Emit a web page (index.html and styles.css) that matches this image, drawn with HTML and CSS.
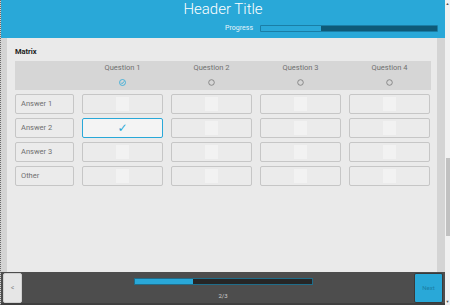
FILE: index.html
```html
<!doctype html>
<html>
	<head>
		<title>Matrix</title>
		<link rel="stylesheet" href="styles.css">
	</head>
	<body>

		<div id="page">
			<div id="header">
				<h1 id="title">Header Title</h1>
				<div id="progress">
					<span class="progress-label">Progress</span>
					<div class="progress-bar"><div class="progress-fill"></div></div>
				</div>
			</div>

			<div id="main">
				<div id="panel">
					<div class="question-title">Matrix</div>

					<div class="matrix-head">
						<div></div>
						<div class="col-head">
							<span>Question 1</span>
							<svg class="radio" width="7" height="7" viewBox="0 0 7 7">
								<circle cx="3.5" cy="3.5" r="3" fill="none" stroke="#29a8d8" stroke-width="0.8"/>
								<path d="M2 3.6 L3.1 4.7 L5.1 2.4" fill="none" stroke="#29a8d8" stroke-width="0.9"/>
							</svg>
						</div>
						<div class="col-head">
							<span>Question 2</span>
							<svg class="radio" width="7" height="7" viewBox="0 0 7 7"><circle cx="3.5" cy="3.5" r="2.8" fill="none" stroke="#777" stroke-width="0.8"/></svg>
						</div>
						<div class="col-head">
							<span>Question 3</span>
							<svg class="radio" width="7" height="7" viewBox="0 0 7 7"><circle cx="3.5" cy="3.5" r="2.8" fill="none" stroke="#777" stroke-width="0.8"/></svg>
						</div>
						<div class="col-head">
							<span>Question 4</span>
							<svg class="radio" width="7" height="7" viewBox="0 0 7 7"><circle cx="3.5" cy="3.5" r="2.8" fill="none" stroke="#777" stroke-width="0.8"/></svg>
						</div>
					</div>

					<div class="matrix-body">
						<div class="row-label">Answer 1</div>
						<div class="cell"><span class="box"></span></div>
						<div class="cell"><span class="box"></span></div>
						<div class="cell"><span class="box"></span></div>
						<div class="cell"><span class="box"></span></div>

						<div class="row-label">Answer 2</div>
						<div class="cell selected"><span class="tick">✓</span></div>
						<div class="cell"><span class="box"></span></div>
						<div class="cell"><span class="box"></span></div>
						<div class="cell"><span class="box"></span></div>

						<div class="row-label">Answer 3</div>
						<div class="cell"><span class="box"></span></div>
						<div class="cell"><span class="box"></span></div>
						<div class="cell"><span class="box"></span></div>
						<div class="cell"><span class="box"></span></div>

						<div class="row-label">Other</div>
						<div class="cell"><span class="box"></span></div>
						<div class="cell"><span class="box"></span></div>
						<div class="cell"><span class="box"></span></div>
						<div class="cell"><span class="box"></span></div>
					</div>
				</div>
			</div>

			<div id="footer">
				<button class="btn-back">&lt;</button>
				<div class="footer-progress">
					<div class="footer-bar"><div class="footer-fill"></div></div>
					<div class="footer-count">2/3</div>
				</div>
				<button class="btn-next">Next</button>
			</div>
		</div>

		<div id="scrollbar">
			<div class="scroll-arrow">&#9650;</div>
			<div class="scroll-track"><div class="scroll-thumb"></div></div>
			<div class="scroll-arrow">&#9660;</div>
		</div>

	</body>
</html>
```

FILE: styles.css
```css
html, body {
	margin: 0;
	height: 305px;
	overflow: hidden;
}

body {
	display: flex;
	font-family: Roboto, "Liberation Sans", sans-serif;
	background: #d4d4d4;
}

#page {
	width: 445px;
	height: 305px;
	display: flex;
	flex-direction: column;
	border-left: 1px dotted #6a6a6a;
	box-sizing: border-box;
}

/* HEADER */
#header {
	height: 38px;
	background: #29a8d8;
	color: #ffffff;
}

#title {
	margin: 0;
	padding-top: 1px;
	font-size: 15px;
	font-weight: 300;
	text-align: center;
	line-height: 16px;
}

#progress {
	display: flex;
	align-items: center;
	justify-content: flex-end;
	margin-top: 7px;
	padding-right: 7px;
}

.progress-label {
	font-size: 7px;
	margin-right: 7px;
	color: #e6f5fb;
}

.progress-bar {
	width: 176px;
	height: 5px;
	background: #0e5a78;
	border: 1px solid #1a7ea6;
	border-radius: 1px;
}

.progress-fill {
	width: 60px;
	height: 100%;
	background: #2aa8d8;
}

/* CONTENT */
#main {
	flex: 1;
	padding: 0 8px 0 6px;
	background: #d4d4d4;
}

#panel {
	height: 100%;
	background: #eaeaea;
	padding: 9px 6px 0 8px;
	box-sizing: border-box;
}

.question-title {
	font-size: 7.5px;
	font-weight: bold;
	color: #222222;
	line-height: 10px;
	height: 14px;
}

.matrix-head,
.matrix-body {
	display: grid;
	grid-template-columns: 59px repeat(4, 81px);
	column-gap: 8px;
}

.matrix-head {
	background: #d6d6d6;
	height: 29px;
}

.col-head {
	display: flex;
	flex-direction: column;
	align-items: center;
	padding-top: 2px;
	font-size: 7.5px;
	color: #707070;
}

.radio {
	margin-top: 7px;
}

.matrix-body {
	margin-top: 4px;
	grid-auto-rows: 20px;
	row-gap: 4px;
}

.row-label,
.cell {
	border: 1px solid #c6c6c6;
	border-radius: 2px;
	background: #ebebeb;
	box-sizing: border-box;
}

.row-label {
	font-size: 7.5px;
	color: #707070;
	line-height: 18px;
	padding-left: 5px;
}

.cell {
	display: flex;
	justify-content: center;
	align-items: center;
}

.box {
	width: 13px;
	height: 14px;
	background: #f2f2f2;
}

.cell.selected {
	border-color: #29a8d8;
	background: #f4f4f4;
}

.tick {
	color: #29a8d8;
	font-size: 12px;
	font-family: "DejaVu Sans", sans-serif;
	line-height: 12px;
}

/* FOOTER */
#footer {
	height: 33px;
	background: #4d4d4d;
	display: flex;
	align-items: center;
	padding: 0 2px;
	border-bottom: 2px solid #3f3f3f;
	box-sizing: border-box;
}

button {
	font-family: Roboto, "Liberation Sans", sans-serif;
	border-radius: 2px;
	padding: 0;
	cursor: pointer;
}

.btn-back {
	width: 19px;
	height: 30px;
	background: #e6e6e6;
	border: 1px solid #d0d0d0;
	color: #888888;
	font-size: 7px;
}

.footer-progress {
	flex: 1;
	display: flex;
	flex-direction: column;
	align-items: center;
	padding-left: 10px;
	padding-top: 2px;
}

.footer-bar {
	width: 177px;
	height: 5px;
	background: #262626;
	border: 1px solid #1f6d8a;
}

.footer-fill {
	width: 58px;
	height: 100%;
	background: #29a8d8;
}

.footer-count {
	font-size: 6px;
	color: #d0d0d0;
	margin-top: 7px;
}

.btn-next {
	width: 29px;
	height: 30px;
	background: #29a8d8;
	border: 1px solid #3a3a3a;
	color: #1b7fa6;
	font-size: 6px;
}

/* SCROLLBAR */
#scrollbar {
	width: 5px;
	height: 305px;
	background: #f1f1f1;
	display: flex;
	flex-direction: column;
}

.scroll-arrow {
	font-size: 4px;
	color: #555555;
	line-height: 7px;
	text-align: center;
}

.scroll-track {
	flex: 1;
	padding-top: 151px;
}

.scroll-thumb {
	height: 78px;
	margin-left: 1px;
	background: #c1c1c1;
}
```
